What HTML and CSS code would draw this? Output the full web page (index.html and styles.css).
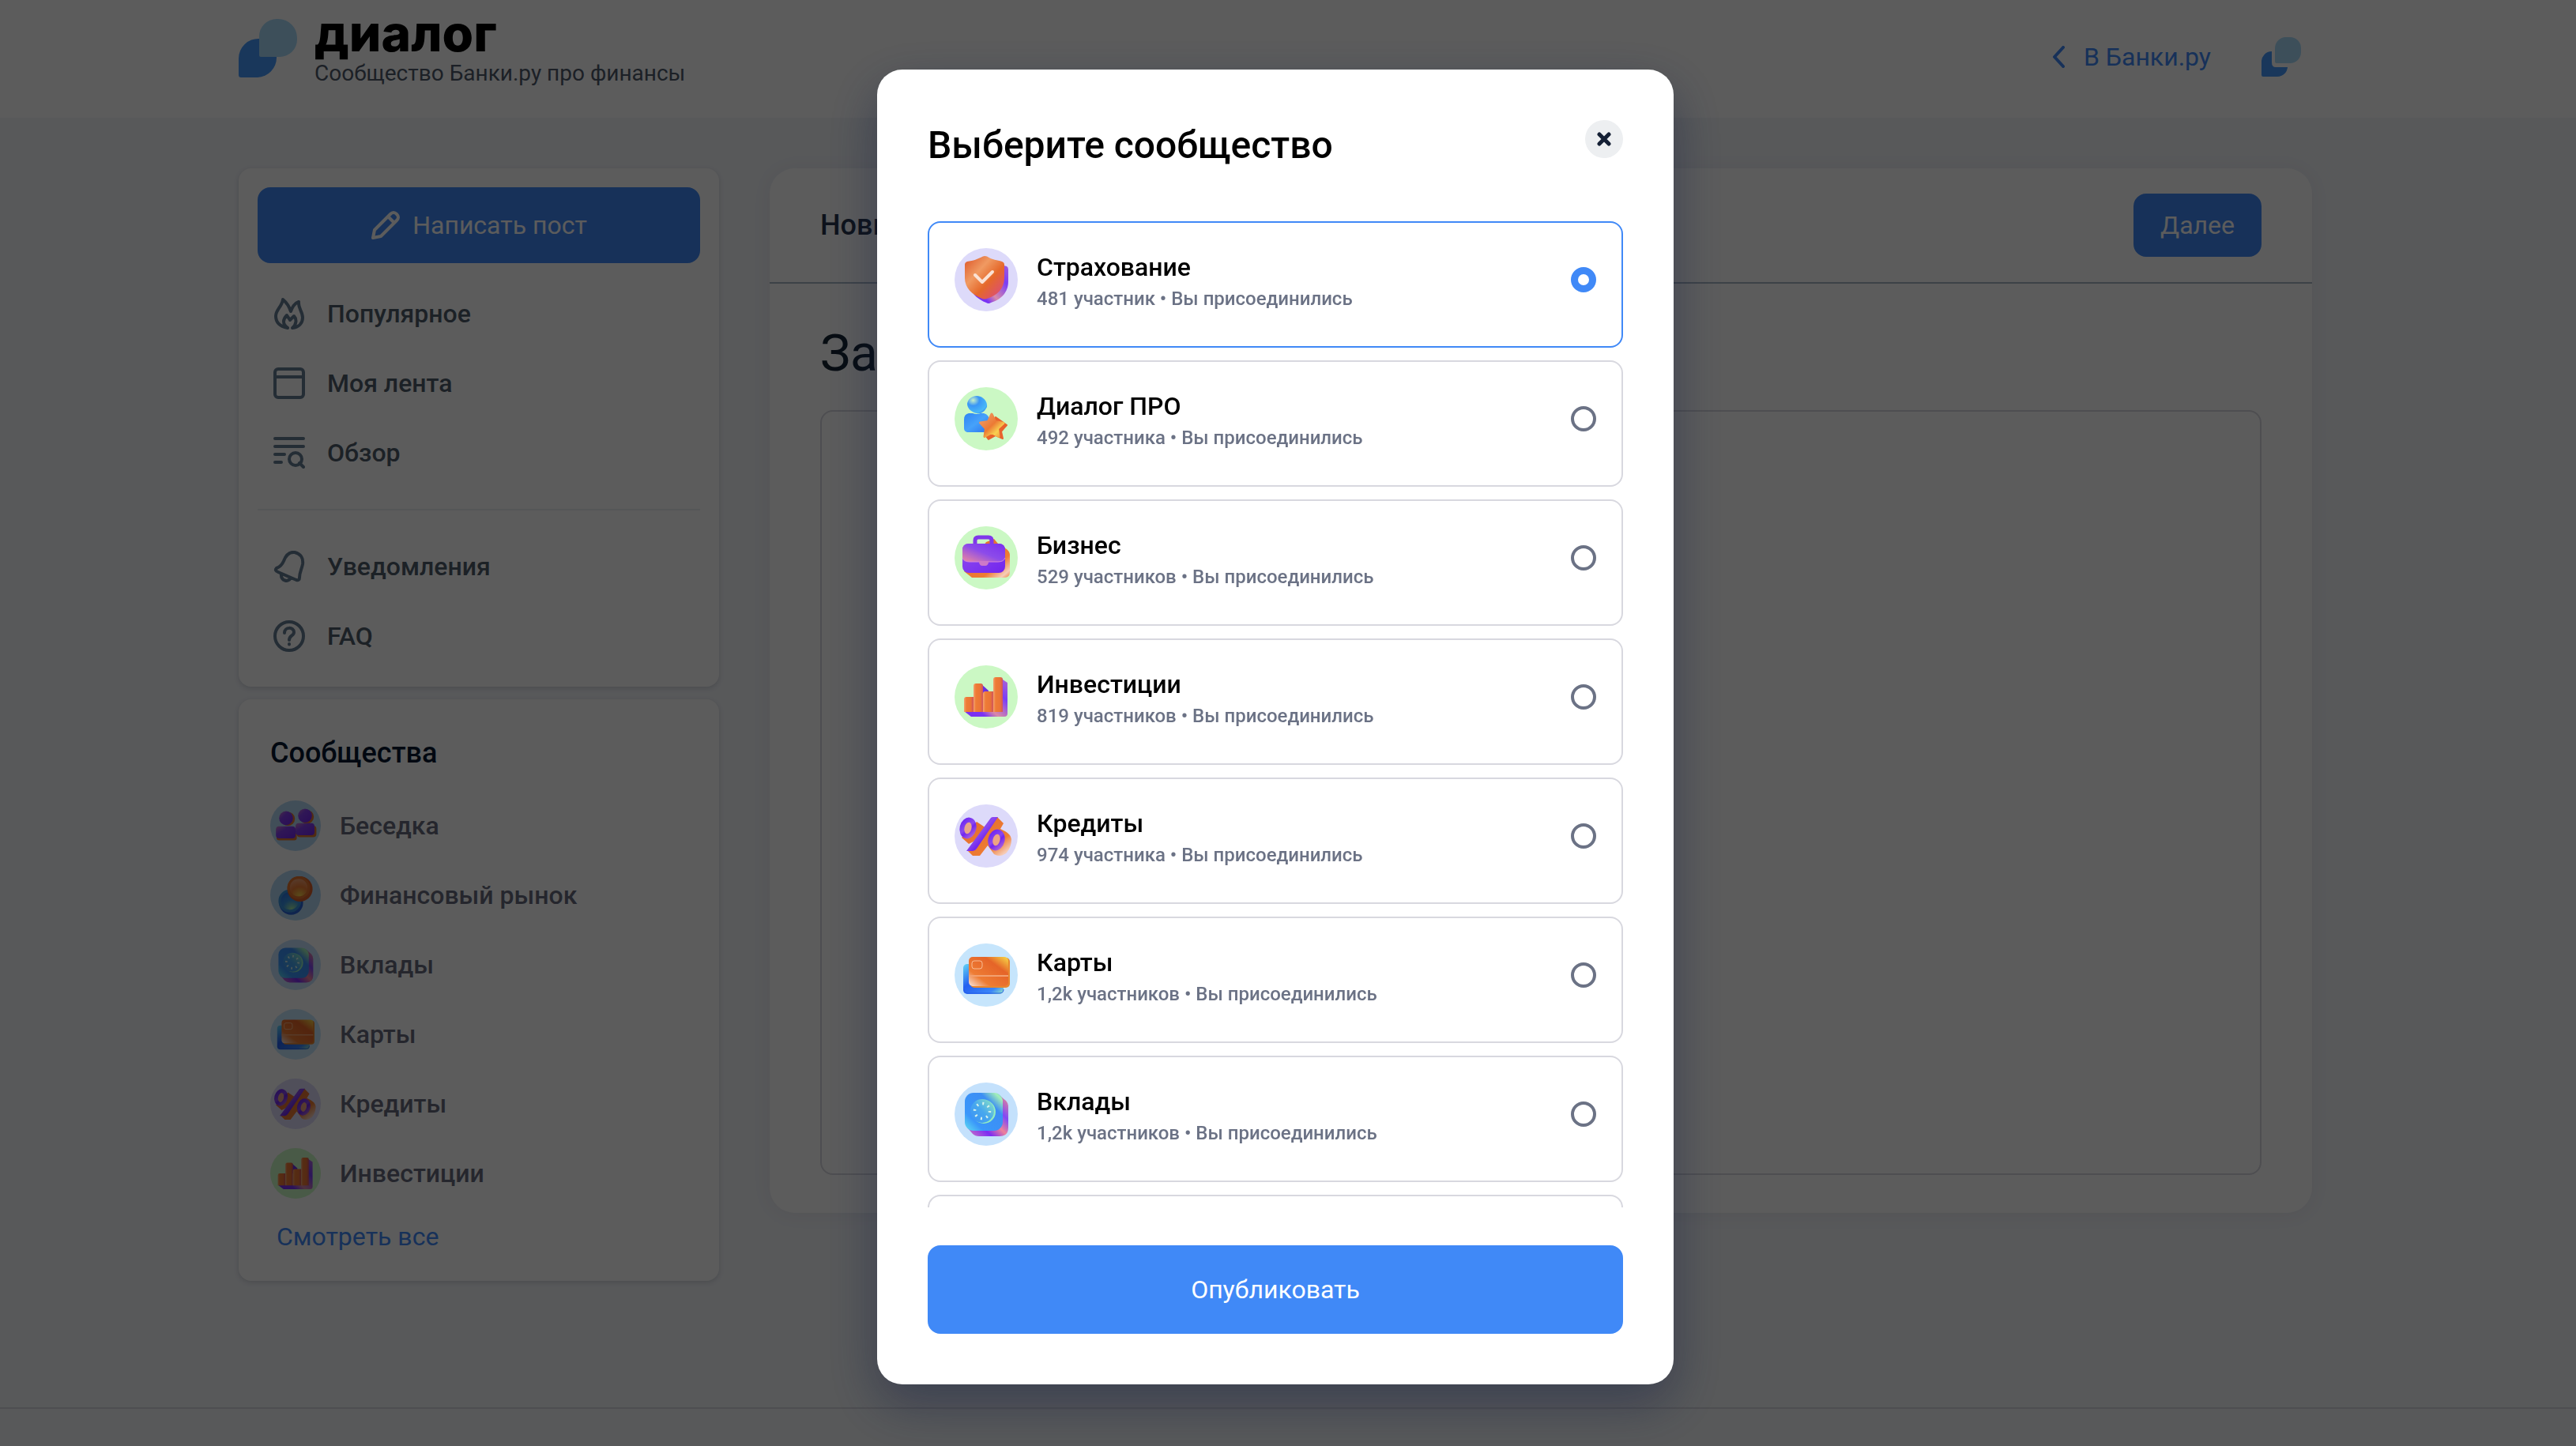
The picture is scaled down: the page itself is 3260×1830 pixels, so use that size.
FILE: index.html
```html
<!DOCTYPE html>
<html lang="ru">
<head>
<meta charset="utf-8">
<meta name="viewport" content="width=device-width, initial-scale=1">
<title>Диалог — новый пост</title>
<link rel="stylesheet" href="styles.css">
</head>
<body>
<svg class="sprite" width="0" height="0" aria-hidden="true">
  <defs>
    <linearGradient id="g-orange" x1="0" y1="0" x2="1" y2="1"><stop offset="0" stop-color="#dc5426"/><stop offset=".35" stop-color="#f09a62"/><stop offset=".6" stop-color="#e5682a"/><stop offset="1" stop-color="#d9468c"/></linearGradient>
    <linearGradient id="g-rust" x1="0" y1="0" x2="1" y2="0"><stop offset="0" stop-color="#f4a070"/><stop offset=".25" stop-color="#ee7c36"/><stop offset=".7" stop-color="#ea7436"/><stop offset="1" stop-color="#d0545e"/></linearGradient>
    <linearGradient id="g-side" x1="0" y1="0" x2="1" y2="1"><stop offset="0" stop-color="#e06a2c"/><stop offset=".7" stop-color="#ee7c34"/><stop offset=".9" stop-color="#f6cdb8"/><stop offset="1" stop-color="#ee8240"/></linearGradient>
    <linearGradient id="g-violet" x1="1" y1="0" x2="0" y2="1"><stop offset="0" stop-color="#b06ad0"/><stop offset=".3" stop-color="#7a3df6"/><stop offset=".6" stop-color="#d98aa8"/><stop offset=".75" stop-color="#7a33f4"/><stop offset="1" stop-color="#7a2cf0"/></linearGradient>
    <linearGradient id="g-purple" x1="0" y1="0" x2="1" y2="1"><stop offset="0" stop-color="#c87ac8"/><stop offset=".35" stop-color="#8540ee"/><stop offset="1" stop-color="#7224ee"/></linearGradient>
    <linearGradient id="g-flap" x1="1" y1="0" x2="0" y2="1"><stop offset="0" stop-color="#7a30ee"/><stop offset=".5" stop-color="#8c4bea"/><stop offset="1" stop-color="#ee8a9c"/></linearGradient>
    <linearGradient id="g-percent" x1="0" y1="0" x2="1" y2="1"><stop offset="0" stop-color="#6d25f2"/><stop offset=".45" stop-color="#8b48ee"/><stop offset=".6" stop-color="#7226f0"/><stop offset="1" stop-color="#b066d8"/></linearGradient>
    <linearGradient id="g-card" x1="0" y1="1" x2="1" y2="0"><stop offset="0" stop-color="#f8e4dc"/><stop offset=".28" stop-color="#ee7c34"/><stop offset=".7" stop-color="#e56428"/><stop offset="1" stop-color="#f8dc48"/></linearGradient>
    <linearGradient id="g-blue" x1="0" y1="0" x2="1" y2="1"><stop offset="0" stop-color="#62d4f4"/><stop offset=".4" stop-color="#2460f0"/><stop offset=".8" stop-color="#3a86f8"/><stop offset="1" stop-color="#9cf0c0"/></linearGradient>
    <linearGradient id="g-safe" x1="0" y1="1" x2="1" y2="0"><stop offset="0" stop-color="#60e0f0"/><stop offset=".25" stop-color="#3a96fa"/><stop offset=".7" stop-color="#3c8ef4"/><stop offset=".9" stop-color="#a4f0b8"/><stop offset="1" stop-color="#58b8f0"/></linearGradient>
    <linearGradient id="g-dial" x1="0" y1="1" x2="1" y2="0"><stop offset="0" stop-color="#3a90f6"/><stop offset=".5" stop-color="#48a8ee"/><stop offset="1" stop-color="#8ee8c0"/></linearGradient>
    <linearGradient id="g-pink" x1="0" y1="1" x2="1" y2="0"><stop offset="0" stop-color="#d27ac0"/><stop offset=".3" stop-color="#7c2cf4"/><stop offset=".5" stop-color="#ee829a"/><stop offset=".7" stop-color="#8048f6"/><stop offset="1" stop-color="#ee8c90"/></linearGradient>
    <radialGradient id="g-head" cx=".3" cy=".25" r=".9"><stop offset="0" stop-color="#c8f0c8"/><stop offset=".35" stop-color="#3a96f6"/><stop offset=".8" stop-color="#48b8f8"/><stop offset="1" stop-color="#2c78f0"/></radialGradient>
    <linearGradient id="g-body" x1="0" y1="0" x2="1" y2="1"><stop offset="0" stop-color="#2e84f4"/><stop offset=".5" stop-color="#46a2fa"/><stop offset="1" stop-color="#2a72ee"/></linearGradient>
    <linearGradient id="g-star" x1="0" y1="0" x2="1" y2="1"><stop offset="0" stop-color="#f0a070"/><stop offset=".5" stop-color="#ec7a34"/><stop offset=".75" stop-color="#f8d050"/><stop offset="1" stop-color="#ee8a3c"/></linearGradient>
    <radialGradient id="g-coin" cx=".55" cy=".9" r=".9"><stop offset="0" stop-color="#f6d048"/><stop offset=".5" stop-color="#ee7c34"/><stop offset="1" stop-color="#f2a880"/></radialGradient>
    <radialGradient id="g-coin-blue" cx=".6" cy=".9" r=".9"><stop offset="0" stop-color="#a0e8a0"/><stop offset=".5" stop-color="#3a92e0"/><stop offset="1" stop-color="#2c70e0"/></radialGradient>
  </defs>

  <symbol id="i-insurance" viewBox="0 0 80 80">
    <circle cx="40" cy="40" r="40" fill="#dddafa"/>
    <path d="M24 20L44 14Q56 20 66 23Q68 24 68 27V42C68 57 58 65 46 69Q43 71 40 69C30 65 23 59 20 50Z" fill="url(#g-violet)"/>
    <path d="M36 10.500Q38 9.500 41 10.500C48 15 54 15 60 17Q63 18 63 21V38C63 51 54 60 41 64Q38 65 35 64C22 59 13 50 13 38V21Q13 18 16 17C24 16 29 14 36 10.500Z" fill="url(#g-orange)"/>
    <path d="M26 34L35 43L48 30" fill="none" stroke="#fbe2d4" stroke-width="4" stroke-linecap="round" stroke-linejoin="round"/>
  </symbol>
  <symbol id="i-pro" viewBox="0 0 80 80">
    <circle cx="40" cy="40" r="40" fill="#cbf8c4"/>
    <path d="M28 11C36 11 42 18 41 25C38 31 34 34 28 33C22 32 16 27 16 21C17 15 22 11 28 11Z" fill="url(#g-head)"/>
    <path d="M18 33H23Q28 35 33 33H37Q44 35 44 42V57H16Q12 56 12 52V41Q12 34 18 33Z" fill="url(#g-body)"/>
    <path d="M52 38L66 48L59 56L61 65L52 61L43 66L40 62Z" fill="#e8622c" stroke="#e8622c" stroke-width="2" stroke-linejoin="round"/>
    <path d="M47 34L51.500 43.500L62 45.500L54.500 52.500L56 62.500L47 57.500L38 62.500L39.500 52.500L32.500 45L42.500 43.500Z" fill="url(#g-star)" stroke="url(#g-star)" stroke-width="3" stroke-linejoin="round"/>
  </symbol>
  <symbol id="i-business" viewBox="0 0 80 80">
    <circle cx="40" cy="40" r="40" fill="#cbf8c4"/>
    <path d="M50 16L55 22L66 29Q70 32 70 37V58Q70 65 63 65H22L12 57L40 20Z" fill="url(#g-side)"/>
    <path d="M26 24V18Q26 14 30 14H43Q47 14 47 18V24" fill="none" stroke="#8038ea" stroke-width="5"/>
    <rect x="10" y="22" width="54" height="37" rx="8" fill="url(#g-purple)"/>
    <path d="M10 40V30Q10 22 18 22H56Q64 22 64 30V40Q62 45 55 45H19Q12 45 10 40Z" fill="url(#g-flap)"/>
    <path d="M10 40Q12 45 19 45H55Q62 45 64 40" fill="none" stroke="#d487dc" stroke-width="1"/>
    <path d="M31 44H43V46Q42 50 39 50H35Q32 50 31 46Z" fill="#cc78c8"/>
  </symbol>
  <symbol id="i-invest" viewBox="0 0 80 80">
    <circle cx="40" cy="40" r="40" fill="#cbf8c4"/>
    <path d="M58 16L67 22V61Q67 65 63 65H21L12 58H58Z" fill="url(#g-violet)"/>
    <path d="M33 23L43 32V40H33Z" fill="#6a30e0"/>
    <path d="M12 43Q12 40 15 40H24V59H12Z" fill="url(#g-rust)"/>
    <path d="M24 26Q24 23 27 23H33Q36 23 36 26V59H24Z" fill="url(#g-rust)"/>
    <path d="M36 36Q36 33 39 33H49V59H36Z" fill="url(#g-rust)"/>
    <path d="M49 18Q49 15 52 15H58Q61 15 61 18V59H49Z" fill="url(#g-rust)"/>
  </symbol>
  <symbol id="i-credit" viewBox="0 0 80 80">
    <circle cx="40" cy="40" r="40" fill="#dddafa"/>
    <path d="M9 42L18 50L30 44L16 58L23 65H32L42 52L50 63Q58 68 66 61Q72 54 72 44Q71 38 64 34L58 31L62 24L54 16L40 30L28 22Z" fill="url(#g-side)"/>
    <ellipse cx="17" cy="30" rx="7.500" ry="10.500" transform="rotate(14 17 30)" fill="#e9a58a" stroke="url(#g-percent)" stroke-width="6"/>
    <path d="M46 17Q47 16 49 16H55L28 56Q26 59 23 59H15Z" fill="url(#g-percent)"/>
    <ellipse cx="53" cy="45" rx="7.500" ry="10.500" transform="rotate(14 53 45)" fill="#eea482" stroke="url(#g-percent)" stroke-width="6"/>
  </symbol>
  <symbol id="i-cards" viewBox="0 0 80 80">
    <circle cx="40" cy="40" r="40" fill="#c6e5fc"/>
    <rect x="11" y="26" width="51" height="38" rx="5" fill="url(#g-blue)"/>
    <path d="M12 58Q12 63 17 63H57Q62 63 62 58" fill="none" stroke="#245ce8" stroke-width="1"/>
    <rect x="20" y="18" width="50" height="38" rx="5" fill="#e8862e"/>
    <rect x="18" y="17" width="50" height="37" rx="5" fill="url(#g-card)"/>
    <path d="M18 41H68" stroke="#f2a070" stroke-width="2"/>
    <rect x="22" y="22" width="13" height="10" rx="3" fill="none" stroke="#f8bc94" stroke-width="1"/>
  </symbol>
  <symbol id="i-deposit" viewBox="0 0 80 80">
    <circle cx="40" cy="40" r="40" fill="#c4e1fc"/>
    <path d="M58 17L65 23Q68 26 68 31V57Q68 68 57 68H31Q26 68 23 65L16 57Z" fill="url(#g-pink)"/>
    <rect x="13" y="13" width="48" height="48" rx="11" fill="url(#g-safe)"/>
    <circle cx="37" cy="37" r="15" fill="#92ecc0"/>
    <circle cx="35" cy="36" r="15" fill="url(#g-dial)"/>
    <circle cx="35" cy="36" r="9.500" fill="none" stroke="#d8f4ec" stroke-width="3.500" stroke-dasharray="2 5.460"/>
  </symbol>
  <symbol id="i-people" viewBox="0 0 80 80">
    <circle cx="40" cy="40" r="40" fill="#b4d8f4"/>
    <g fill="#e07830"><circle cx="28" cy="29" r="11"/><circle cx="58" cy="26" r="11"/><rect x="10" y="44" width="32" height="19" rx="4"/><rect x="42" y="40" width="31" height="18" rx="5"/></g>
    <g fill="url(#g-purple)"><circle cx="25" cy="28" r="11"/><circle cx="55" cy="24" r="11"/><rect x="9" y="41" width="31" height="19" rx="5"/><rect x="40" y="36" width="30" height="19" rx="5"/></g>
  </symbol>
  <symbol id="i-coins" viewBox="0 0 80 80">
    <circle cx="40" cy="40" r="40" fill="#b4d8f4"/>
    <circle cx="33" cy="52" r="19" fill="#2c64d8"/>
    <circle cx="31" cy="49" r="16" fill="url(#g-coin-blue)" stroke="#3c94dc" stroke-width="4"/>
    <circle cx="47" cy="30" r="20" fill="#d8602a"/>
    <circle cx="45" cy="28" r="16" fill="url(#g-coin)" stroke="#e4742e" stroke-width="4"/>
  </symbol>
</svg>

<header class="topbar">
  <div class="container topbar-inner">
    <a class="brand" href="#">
      <svg class="brand-mark" viewBox="0 0 74 74" aria-hidden="true"><path d="M26 25H48V49A25 25 0 0 1 24 74H3Q0 74 0 71V50A25 25 0 0 1 26 25Z" fill="#459afb"/><path d="M48 0H50A24 24 0 0 1 74 24V26A22 22 0 0 1 52 48H28Q26 48 26 46V22A22 22 0 0 1 48 0Z" fill="#a9dbfa"/></svg>
      <span class="brand-text">
        <span class="brand-name">диалог</span>
        <span class="brand-note">Сообщество Банки.ру про финансы</span>
      </span>
    </a>
    <nav class="topbar-nav" aria-label="Переходы">
      <a class="back-link" href="#">
        <svg width="16" height="28" viewBox="0 0 16 28" aria-hidden="true"><path d="M14 2L3 14L14 26" fill="none" stroke="currentColor" stroke-width="4" stroke-linecap="round" stroke-linejoin="round"/></svg>
        В Банки.ру
      </a>
      <a class="profile-link" href="#" aria-label="Профиль">
        <svg width="50" height="50" viewBox="0 0 50 50" aria-hidden="true"><path d="M13 18V32Q13 38 18 38H33A13 13 0 0 1 20 50H2Q0 50 0 48V32A13 13 0 0 1 13 18Z" fill="#459afb"/><path d="M32 0H36A14 14 0 0 1 50 14V19A14 14 0 0 1 36 33H19Q17 33 17 31V14A14 14 0 0 1 32 0Z" fill="#a9dbfa"/></svg>
      </a>
    </nav>
  </div>
</header>

<div class="container layout">
  <aside class="sidebar">
    <section class="panel menu-panel">
      <button class="button write-button" type="button">
        <svg width="38" height="38" viewBox="0 0 38 38" aria-hidden="true"><g fill="none" stroke="currentColor" stroke-width="4" stroke-linejoin="round"><path d="M3 35L5 25L25 5Q29 1 33 5Q37 9 33 13L13 33Z"/><path d="M22 8L30 16"/></g></svg>
        Написать пост
      </button>
      <nav aria-label="Разделы">
        <ul class="menu">
          <li><a class="menu-link" href="#"><svg class="line-icon" viewBox="0 0 40 40" aria-hidden="true"><path d="M18 38C8 36 3 31 3 23C3 15 11 11 12 2C18 7 20 11 22 17C24 12 26 7 32 5C31 13 37 17 37 25C37 32 32 37 24 38C29 34 30 27 26 23L21 28L17 22C12 27 11 33 18 38"/></svg>Популярное</a></li>
          <li><a class="menu-link" href="#"><svg class="line-icon" viewBox="0 0 40 40" aria-hidden="true"><rect x="2" y="2" width="36" height="36" rx="4"/><path d="M2 12H38"/></svg>Моя лента</a></li>
          <li><a class="menu-link" href="#"><svg class="line-icon" viewBox="0 0 40 40" aria-hidden="true"><path d="M2 2H38M2 12H38M2 22H14M2 32H10M33 33L38 38"/><circle cx="28" cy="28" r="8"/></svg>Обзор</a></li>
        </ul>
        <hr class="divider">
        <ul class="menu">
          <li><a class="menu-link" href="#"><svg class="line-icon" viewBox="0 0 40 40" aria-hidden="true"><path d="M4 22Q10 20 13 13C16 5 20 1 27 2C35 4 38 10 37 17C36 23 33 27 33 34Q33 38 29 37L6 27Q1 25 4 22ZM10 29C9 38 19 41 22 34"/></svg>Уведомления</a></li>
          <li><a class="menu-link" href="#"><svg class="line-icon" viewBox="0 0 40 40" aria-hidden="true"><circle cx="20" cy="20" r="18"/><path d="M14 16C14 8 26 8 26 15C26 20 20 19 20 25M20 30V30.500"/></svg>FAQ</a></li>
        </ul>
      </nav>
    </section>

    <section class="panel groups-panel">
      <h2 class="groups-title">Сообщества</h2>
      <ul class="groups">
        <li><a class="group-link" href="#"><svg class="group-icon" aria-hidden="true"><use href="#i-people"/></svg>Беседка</a></li>
        <li><a class="group-link" href="#"><svg class="group-icon" aria-hidden="true"><use href="#i-coins"/></svg>Финансовый рынок</a></li>
        <li><a class="group-link" href="#"><svg class="group-icon" aria-hidden="true"><use href="#i-deposit"/></svg>Вклады</a></li>
        <li><a class="group-link" href="#"><svg class="group-icon" aria-hidden="true"><use href="#i-cards"/></svg>Карты</a></li>
        <li><a class="group-link" href="#"><svg class="group-icon" aria-hidden="true"><use href="#i-credit"/></svg>Кредиты</a></li>
        <li><a class="group-link" href="#"><svg class="group-icon" aria-hidden="true"><use href="#i-invest"/></svg>Инвестиции</a></li>
      </ul>
      <a class="all-link" href="#">Смотреть все</a>
    </section>
  </aside>

  <main class="composer">
    <header class="composer-head">
      <h1 class="composer-title">Новый пост</h1>
      <button class="button next-button" type="button">Далее</button>
    </header>
    <div class="composer-body">
      <input class="post-title" type="text" placeholder="Заголовок" aria-label="Заголовок">
      <textarea class="post-text" aria-label="Текст поста"></textarea>
    </div>
  </main>
</div>

<footer class="footer"></footer>

<div class="overlay">
  <form class="modal" role="dialog" aria-modal="true" aria-labelledby="modal-title">
    <header class="modal-head">
      <h2 class="modal-title" id="modal-title">Выберите сообщество</h2>
      <button class="close-button" type="button" aria-label="Закрыть">
        <svg width="20" height="20" viewBox="0 0 20 20" aria-hidden="true"><path d="M4 4L16 16M16 4L4 16" stroke="currentColor" stroke-width="5" stroke-linecap="round"/></svg>
      </button>
    </header>
    <div class="choices">
      <label class="choice"><svg class="choice-icon" aria-hidden="true"><use href="#i-insurance"/></svg><span class="choice-text"><span class="choice-name">Страхование</span><span class="choice-note">481 участник • Вы присоединились</span></span><input class="radio" type="radio" name="community" checked></label>
      <label class="choice"><svg class="choice-icon" aria-hidden="true"><use href="#i-pro"/></svg><span class="choice-text"><span class="choice-name">Диалог ПРО</span><span class="choice-note">492 участника • Вы присоединились</span></span><input class="radio" type="radio" name="community"></label>
      <label class="choice"><svg class="choice-icon" aria-hidden="true"><use href="#i-business"/></svg><span class="choice-text"><span class="choice-name">Бизнес</span><span class="choice-note">529 участников • Вы присоединились</span></span><input class="radio" type="radio" name="community"></label>
      <label class="choice"><svg class="choice-icon" aria-hidden="true"><use href="#i-invest"/></svg><span class="choice-text"><span class="choice-name">Инвестиции</span><span class="choice-note">819 участников • Вы присоединились</span></span><input class="radio" type="radio" name="community"></label>
      <label class="choice"><svg class="choice-icon" aria-hidden="true"><use href="#i-credit"/></svg><span class="choice-text"><span class="choice-name">Кредиты</span><span class="choice-note">974 участника • Вы присоединились</span></span><input class="radio" type="radio" name="community"></label>
      <label class="choice"><svg class="choice-icon" aria-hidden="true"><use href="#i-cards"/></svg><span class="choice-text"><span class="choice-name">Карты</span><span class="choice-note">1,2k участников • Вы присоединились</span></span><input class="radio" type="radio" name="community"></label>
      <label class="choice"><svg class="choice-icon" aria-hidden="true"><use href="#i-deposit"/></svg><span class="choice-text"><span class="choice-name">Вклады</span><span class="choice-note">1,2k участников • Вы присоединились</span></span><input class="radio" type="radio" name="community"></label>
      <div class="choice"></div>
    </div>
    <button class="button publish-button" type="submit">Опубликовать</button>
  </form>
</div>
</body>
</html>
```
FILE: styles.css
```css
:root {
  --blue: #4089f7;
  --gutter: 32px;
}

* {
  box-sizing: border-box;
}

body {
  margin: 0;
  min-height: 100vh;
  display: flex;
  flex-direction: column;
  background: #f3f5f9;
  color: #000;
  font-family: Roboto, "Liberation Sans", sans-serif;
  font-size: 32px;
  line-height: 40px;
}

h1, h2, ul {
  margin: 0;
  padding: 0;
}

ul {
  list-style: none;
}

a {
  color: inherit;
  text-decoration: none;
}

button, input, textarea {
  font: inherit;
}

.sprite {
  display: block;
}

.container {
  width: min(100% - 96px, 2624px);
  margin-left: max(32px, (100% - var(--gutter) - 2624px) / 2);
}

.button {
  display: flex;
  align-items: center;
  justify-content: center;
  padding: 0 32px;
  border: 2px solid var(--blue);
  border-radius: 16px;
  background: var(--blue);
  color: #fff;
  cursor: pointer;
}

/* Top bar */

.topbar {
  background: #fff;
}

.topbar-inner {
  display: flex;
  justify-content: space-between;
  min-height: 149px;
  padding: 20px 0 25px;
}

.brand {
  display: flex;
  gap: 22px;
}

.brand-mark {
  width: 74px;
  height: 78px;
  padding-top: 4px;
}

.brand-text {
  display: flex;
  flex-direction: column;
  gap: 11px;
}

.brand-name {
  font-family: Inter, "Liberation Sans", sans-serif;
  font-size: 64px;
  font-weight: 800;
  line-height: 44px;
}

.brand-note {
  color: #4e5a6b;
  font-size: 28px;
  line-height: 36px;
}

.topbar-nav {
  display: flex;
  align-items: center;
  gap: 64px;
}

.back-link {
  display: flex;
  align-items: center;
  gap: 24px;
  color: var(--blue);
}

.profile-link {
  display: flex;
  padding-right: 14px;
}

/* Page columns */

.layout {
  display: grid;
  grid-template-columns: 608px minmax(0, 1fr);
  align-items: start;
  gap: 64px;
  padding: 64px 0;
}

.sidebar {
  display: grid;
  gap: 16px;
}

.panel {
  border-radius: 16px;
  background: #fff;
  box-shadow: 0 2px 6px rgba(20, 32, 56, 0.16);
}

.menu-panel {
  padding: 24px 24px 20px;
}

.write-button {
  gap: 15px;
  width: 100%;
  height: 96px;
  margin-bottom: 20px;
}

.menu-link {
  display: flex;
  align-items: center;
  gap: 28px;
  height: 88px;
  padding-left: 20px;
  color: #4e5c6b;
  font-weight: 500;
}

.line-icon {
  width: 40px;
  height: 40px;
  fill: none;
  stroke: #657c94;
  stroke-width: 4;
  stroke-linecap: round;
  stroke-linejoin: round;
}

.divider {
  height: 2px;
  margin: 27px 0;
  border: 0;
  background: #eceef2;
}

.groups-panel {
  padding: 46px 40px 36px;
}

.groups-title {
  margin-bottom: 26px;
  color: #061830;
  font-size: 36px;
  font-weight: 500;
  line-height: 44px;
}

.group-link {
  display: flex;
  align-items: center;
  gap: 24px;
  height: 88px;
  color: #676b7c;
  font-weight: 500;
}

.group-icon {
  width: 64px;
  height: 64px;
}

.all-link {
  display: block;
  margin-top: 16px;
  padding-left: 8px;
  color: var(--blue);
}

/* Post composer */

.composer {
  border-radius: 32px;
  background: #fff;
  box-shadow: 0 2px 24px rgba(20, 32, 56, 0.06);
}

.composer-head {
  display: flex;
  align-items: center;
  justify-content: space-between;
  padding: 32px 64px;
  border-bottom: 2px solid #a9b8c6;
}

.composer-title {
  color: #26344c;
  font-size: 36px;
  font-weight: 500;
  line-height: 44px;
}

.next-button {
  height: 80px;
}

.composer-body {
  display: grid;
  gap: 32px;
  padding: 48px 64px;
}

.post-title {
  width: 100%;
  height: 80px;
  padding: 0;
  border: 0;
  outline: 0;
  background: none;
  font-size: 64px;
}

.post-title::placeholder {
  color: #142434;
  opacity: 1;
}

.post-text {
  display: block;
  width: 100%;
  min-height: 968px;
  padding: 32px;
  border: 2px solid #d8d8df;
  border-radius: 16px;
  background: none;
  resize: none;
}

.footer {
  min-height: 49px;
  margin-top: auto;
  border-top: 2px solid #d8d8df;
}

/* Community picker */

.overlay {
  position: fixed;
  inset: 0;
  display: flex;
  align-items: flex-start;
  justify-content: center;
  padding: 88px var(--gutter) 78px 0;
  background: rgba(0, 0, 0, 0.64);
}

.modal {
  display: flex;
  flex-direction: column;
  width: 1008px;
  max-width: 100%;
  max-height: 100%;
  padding: 64px;
  border-radius: 32px;
  background: #fff;
  box-shadow: 0 24px 64px rgba(20, 32, 64, 0.45);
}

.modal-head {
  display: flex;
  align-items: flex-start;
  justify-content: space-between;
  margin-bottom: 64px;
}

.modal-title {
  font-size: 48px;
  font-weight: 500;
  line-height: 64px;
}

.close-button {
  display: grid;
  place-items: center;
  width: 48px;
  height: 48px;
  padding: 0;
  border: 0;
  border-radius: 50%;
  background: #edeff1;
  color: #152035;
}

.choices {
  display: grid;
  flex: 1;
  grid-auto-rows: 160px;
  gap: 16px;
  min-height: 0;
  overflow: hidden;
}

.choice {
  display: grid;
  grid-template-columns: 80px 1fr 32px;
  align-content: start;
  align-items: center;
  column-gap: 24px;
  padding: 32px;
  border: 2px solid #d8d8df;
  border-radius: 16px;
  cursor: pointer;
}

.choice:has(:checked) {
  border-color: var(--blue);
}

.choice-icon {
  width: 80px;
  height: 80px;
}

.choice-text {
  display: grid;
  gap: 4px;
  padding-top: 4px;
  font-weight: 500;
}

.choice-note {
  color: #6b7285;
  font-size: 24px;
  line-height: 32px;
}

.radio {
  appearance: none;
  width: 32px;
  height: 32px;
  margin: 0;
  border: 4px solid #6b7285;
  border-radius: 50%;
  background: #fff;
}

.radio:checked {
  border: 9px solid var(--blue);
}

.publish-button {
  flex: none;
  height: 112px;
  margin-top: 48px;
}
```
